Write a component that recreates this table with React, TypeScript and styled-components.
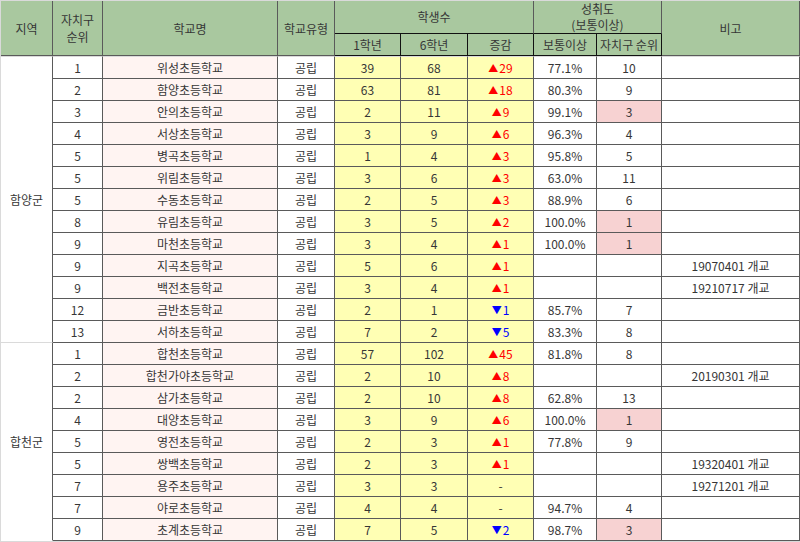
import styled, { createGlobalStyle } from 'styled-components';

const GlobalStyle = createGlobalStyle`
  html, body {
    margin: 0;
    padding: 0;
    background: #ffffff;
  }
  body {
    font-family: 'Noto Sans CJK KR', 'Noto Sans', sans-serif;
  }
`;

const LINE = '#5a5a5a';
const GRID = '#dadada';

type Row = {
  rank: number;
  name: string;
  g1: number;
  g6: number;
  ach?: string;
  achRank?: number;
  note?: string;
};

type Region = {
  name: string;
  rows: Row[];
};

const regions: Region[] = [
  {
    name: '함양군',
    rows: [
      { rank: 1, name: '위성초등학교', g1: 39, g6: 68, ach: '77.1%', achRank: 10 },
      { rank: 2, name: '함양초등학교', g1: 63, g6: 81, ach: '80.3%', achRank: 9 },
      { rank: 3, name: '안의초등학교', g1: 2, g6: 11, ach: '99.1%', achRank: 3 },
      { rank: 4, name: '서상초등학교', g1: 3, g6: 9, ach: '96.3%', achRank: 4 },
      { rank: 5, name: '병곡초등학교', g1: 1, g6: 4, ach: '95.8%', achRank: 5 },
      { rank: 5, name: '위림초등학교', g1: 3, g6: 6, ach: '63.0%', achRank: 11 },
      { rank: 5, name: '수동초등학교', g1: 2, g6: 5, ach: '88.9%', achRank: 6 },
      { rank: 8, name: '유림초등학교', g1: 3, g6: 5, ach: '100.0%', achRank: 1 },
      { rank: 9, name: '마천초등학교', g1: 3, g6: 4, ach: '100.0%', achRank: 1 },
      { rank: 9, name: '지곡초등학교', g1: 5, g6: 6, note: '19070401 개교' },
      { rank: 9, name: '백전초등학교', g1: 3, g6: 4, note: '19210717 개교' },
      { rank: 12, name: '금반초등학교', g1: 2, g6: 1, ach: '85.7%', achRank: 7 },
      { rank: 13, name: '서하초등학교', g1: 7, g6: 2, ach: '83.3%', achRank: 8 },
    ],
  },
  {
    name: '합천군',
    rows: [
      { rank: 1, name: '합천초등학교', g1: 57, g6: 102, ach: '81.8%', achRank: 8 },
      { rank: 2, name: '합천가야초등학교', g1: 2, g6: 10, note: '20190301 개교' },
      { rank: 2, name: '삼가초등학교', g1: 2, g6: 10, ach: '62.8%', achRank: 13 },
      { rank: 4, name: '대양초등학교', g1: 3, g6: 9, ach: '100.0%', achRank: 1 },
      { rank: 5, name: '영전초등학교', g1: 2, g6: 3, ach: '77.8%', achRank: 9 },
      { rank: 5, name: '쌍백초등학교', g1: 2, g6: 3, note: '19320401 개교' },
      { rank: 7, name: '용주초등학교', g1: 3, g6: 3, note: '19271201 개교' },
      { rank: 7, name: '야로초등학교', g1: 4, g6: 4, ach: '94.7%', achRank: 4 },
      { rank: 9, name: '초계초등학교', g1: 7, g6: 5, ach: '98.7%', achRank: 3 },
    ],
  },
];

const colWidths = [52, 50, 175, 57, 66, 67, 66, 63, 65, 138];

const Sheet = styled.div`
  width: 799px;
  border-top: 1px solid ${GRID};
  border-left: 1px solid ${GRID};
  border-bottom: 1px solid ${GRID};
`;

const Table = styled.table`
  width: 799px;
  table-layout: fixed;
  border-collapse: separate;
  border-spacing: 0;
  font-size: 12px;
  color: #363636;
`;

const Col = styled.col<{ $w: number }>`
  width: ${(p) => p.$w}px;
`;

const HeadCell = styled.th<{ $lines?: number }>`
  box-sizing: border-box;
  height: 33px;
  padding: 0;
  background: #a9c89f;
  font-weight: 400;
  text-align: center;
  vertical-align: middle;
  line-height: ${(p) => (p.$lines === 2 ? '17px' : 'normal')};
  border-right: 1px solid ${LINE};
  border-bottom: 1px solid ${LINE};
`;

const GroupCell = styled(HeadCell)`
  line-height: 16px;
  border-bottom-color: #111111;
`;

const SubCell = styled.th`
  box-sizing: border-box;
  height: 22px;
  padding: 0;
  background: #a9c89f;
  font-weight: 400;
  text-align: center;
  vertical-align: middle;
  border-right: 1px solid #111111;
  border-bottom: 1px solid #111111;
`;

const DataRow = styled.tr<{ $first?: boolean }>`
  & > td {
    border-top: ${(p) => (p.$first ? `1px solid ${GRID}` : 'none')};
    height: ${(p) => (p.$first ? 23 : 22)}px;
  }
`;

type Tone = 'plain' | 'name' | 'count' | 'top';

const toneBg: Record<Tone, string> = {
  plain: '#ffffff',
  name: '#fff4f2',
  count: '#ffffb4',
  top: '#f7d2d2',
};

const Cell = styled.td<{ $tone?: Tone; $color?: string }>`
  box-sizing: border-box;
  padding: 0;
  text-align: center;
  vertical-align: middle;
  white-space: nowrap;
  background: ${(p) => toneBg[p.$tone ?? 'plain']};
  color: ${(p) => p.$color ?? '#363636'};
  border-right: 1px solid ${LINE};
  border-bottom: 1px solid ${LINE};
`;

const Arrow = styled.span`
  font-size: 10px;
  margin-right: 1px;
  vertical-align: 1px;
`;

const RegionCell = styled.td<{ $last?: boolean }>`
  box-sizing: border-box;
  padding: 0;
  text-align: center;
  vertical-align: middle;
  background: #ffffff;
  border-right: 1px solid ${LINE};
  border-bottom: 1px solid ${(p) => (p.$last ? '#ffffff' : GRID)};
`;

const changeOf = (row: Row) => {
  const diff = row.g6 - row.g1;
  if (diff > 0) return { arrow: '▲', value: `${diff}`, color: '#ff0000' };
  if (diff < 0) return { arrow: '▼', value: `${-diff}`, color: '#0000ff' };
  return { arrow: '', value: '-', color: '#363636' };
};

const App = () => {
  return (
    <>
      <GlobalStyle />
      <Sheet>
        <Table>
          <colgroup>
            {colWidths.map((w, i) => (
              <Col key={i} $w={w} />
            ))}
          </colgroup>
          <thead>
            <tr>
              <HeadCell rowSpan={2}>지역</HeadCell>
              <HeadCell rowSpan={2} $lines={2}>
                자치구
                <br />
                순위
              </HeadCell>
              <HeadCell rowSpan={2}>학교명</HeadCell>
              <HeadCell rowSpan={2}>학교유형</HeadCell>
              <GroupCell colSpan={3}>학생수</GroupCell>
              <GroupCell colSpan={2}>
                성취도
                <br />
                (보통이상)
              </GroupCell>
              <HeadCell rowSpan={2}>비고</HeadCell>
            </tr>
            <tr>
              <SubCell>1학년</SubCell>
              <SubCell>6학년</SubCell>
              <SubCell>증감</SubCell>
              <SubCell>보통이상</SubCell>
              <SubCell>자치구 순위</SubCell>
            </tr>
          </thead>
          <tbody>
            {regions.map((region, ri) =>
              region.rows.map((row, i) => {
                const change = changeOf(row);
                return (
                  <DataRow key={`${region.name}-${i}`} $first={ri === 0 && i === 0}>
                    {i === 0 && (
                      <RegionCell rowSpan={region.rows.length} $last={ri === regions.length - 1}>
                        {region.name}
                      </RegionCell>
                    )}
                    <Cell>{row.rank}</Cell>
                    <Cell $tone="name">{row.name}</Cell>
                    <Cell>공립</Cell>
                    <Cell $tone="count">{row.g1}</Cell>
                    <Cell $tone="count">{row.g6}</Cell>
                    <Cell $tone="count" $color={change.color}>
                      {change.arrow && <Arrow>{change.arrow}</Arrow>}
                      {change.value}
                    </Cell>
                    <Cell>{row.ach ?? ''}</Cell>
                    <Cell $tone={row.achRank !== undefined && row.achRank <= 3 ? 'top' : 'plain'}>
                      {row.achRank ?? ''}
                    </Cell>
                    <Cell>{row.note ?? ''}</Cell>
                  </DataRow>
                );
              })
            )}
          </tbody>
        </Table>
      </Sheet>
    </>
  );
};

export default App;
